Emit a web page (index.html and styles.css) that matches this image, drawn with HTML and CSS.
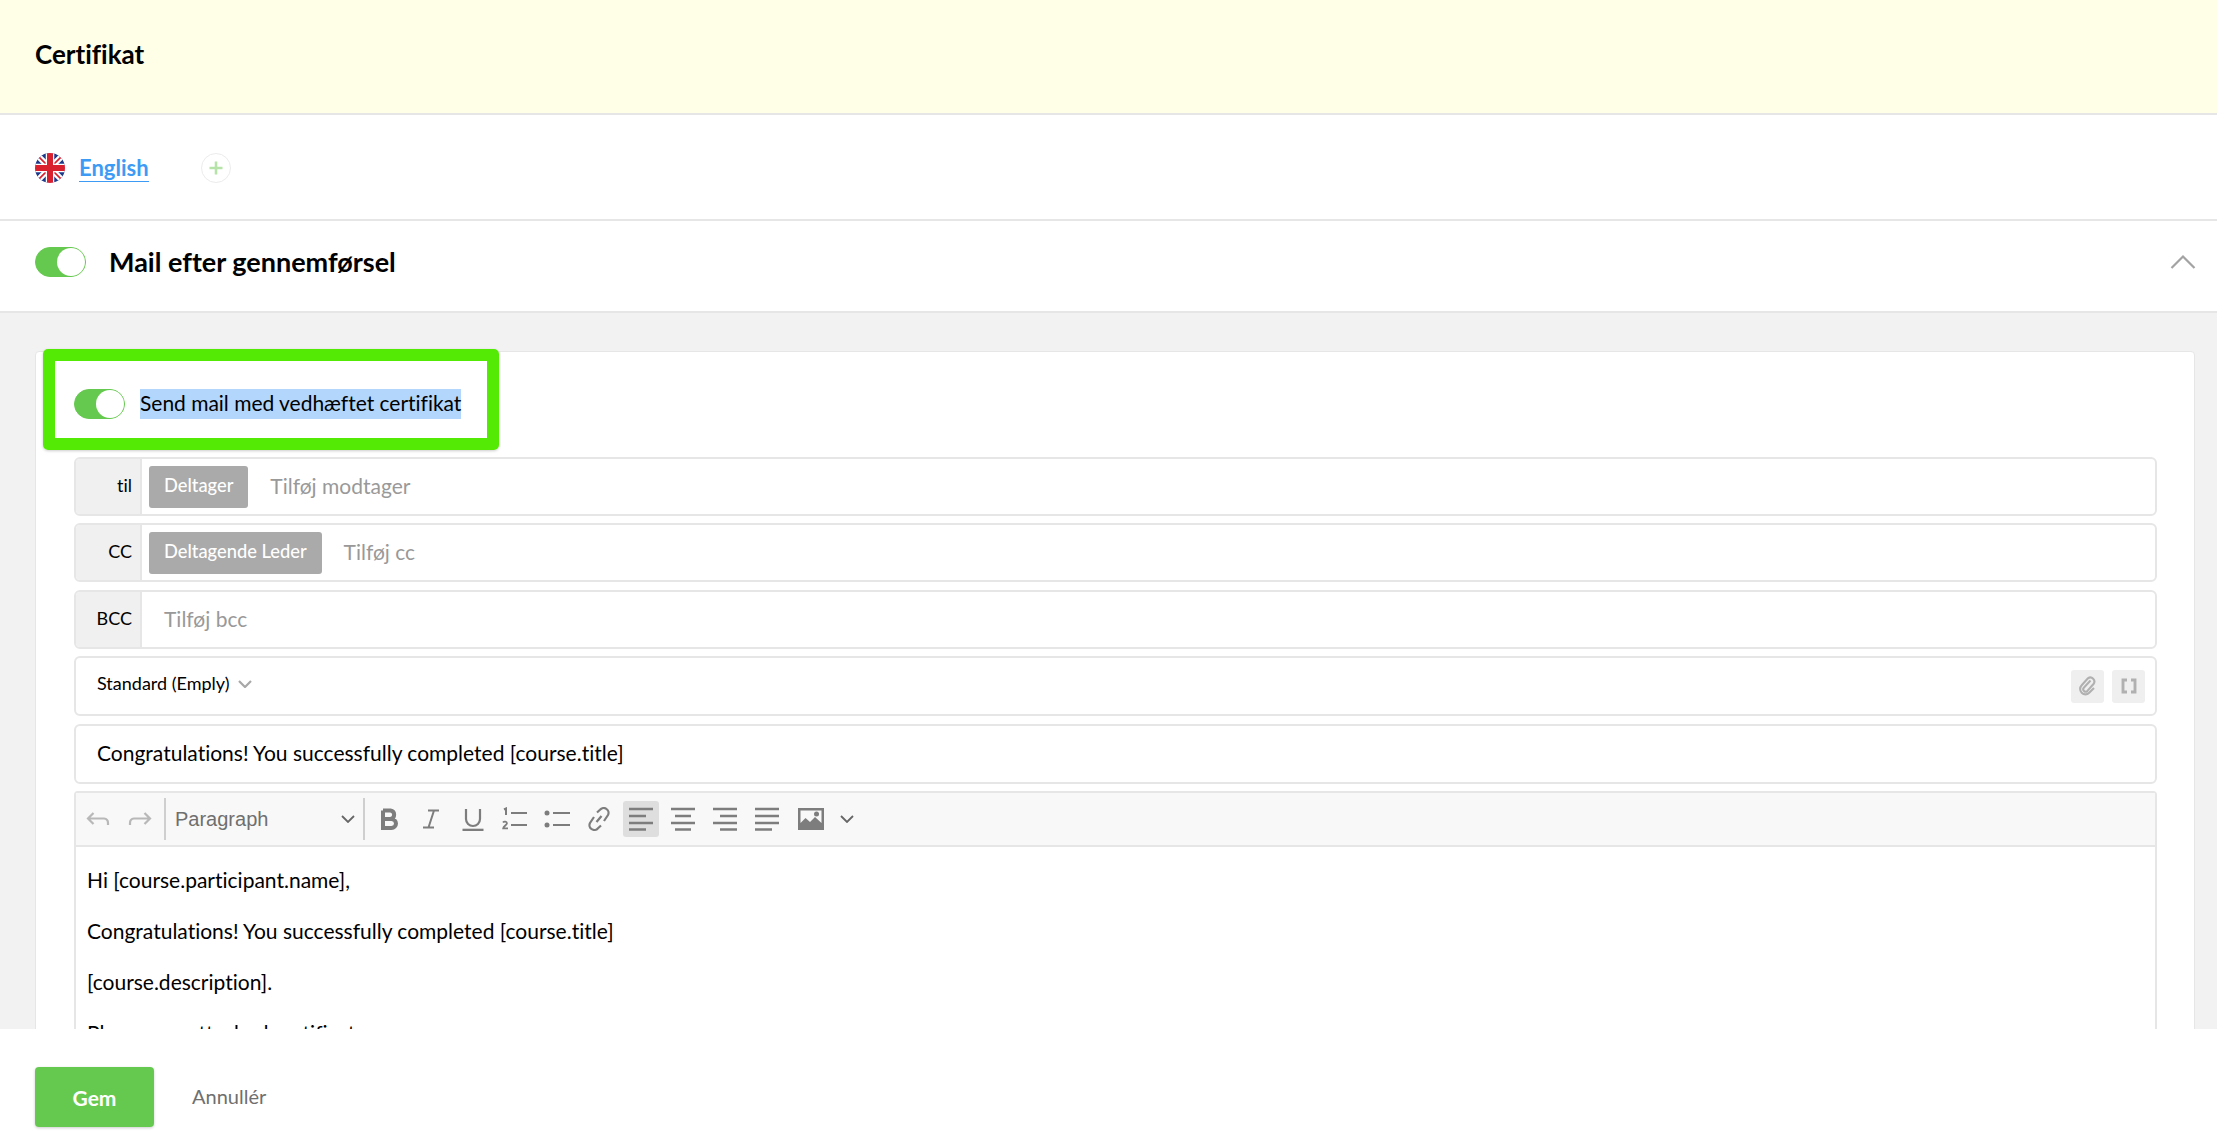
FILE: index.html
```html
<!DOCTYPE html>
<html lang="da">
<head>
<meta charset="utf-8">
<title>Certifikat</title>
<link rel="stylesheet" href="styles.css">
</head>
<body>
<div class="page">
  <div class="scroll">
    <header class="head"><h1>Certifikat</h1></header>
    <div class="langs">
      <svg class="flag" viewBox="0 0 30 30">
        <defs><clipPath id="c"><circle cx="15" cy="15" r="15"/></clipPath></defs>
        <g clip-path="url(#c)">
          <rect width="30" height="30" fill="#1f3a8a"/>
          <path d="M0 0L30 30M30 0L0 30" stroke="#fff" stroke-width="6"/>
          <path d="M0 0L30 30M30 0L0 30" stroke="#d8202f" stroke-width="1.6"/>
          <path d="M15 0V30M0 15H30" stroke="#fff" stroke-width="8.500"/>
          <path d="M15 0V30M0 15H30" stroke="#d8202f" stroke-width="6"/>
        </g>
      </svg>
      <a class="lang-link">English</a>
      <span class="add"><svg viewBox="0 0 16 16" width="16" height="16"><path d="M8 1.5V14.500M1.500 8H14.500" stroke="#b5e3a8" stroke-width="2.600"/></svg></span>
    </div>
    <div class="section">
      <span class="toggle"></span>
      <h2>Mail efter gennemførsel</h2>
      <svg class="collapse" viewBox="0 0 26 16" width="26" height="16"><path d="M1.500 14L13 2.500L24.500 14" fill="none" stroke="#a3a3a3" stroke-width="2.200"/></svg>
    </div>
    <div class="body">
      <div class="card">
        <div class="send">
          <span class="mark"></span>
          <span class="toggle"></span>
          <span class="selected">Send mail med vedhæftet certifikat</span>
        </div>
        <div class="field">
          <label>til</label>
          <div class="value"><span class="chip">Deltager</span><span class="ph">Tilføj modtager</span></div>
        </div>
        <div class="field">
          <label>CC</label>
          <div class="value"><span class="chip">Deltagende Leder</span><span class="ph">Tilføj cc</span></div>
        </div>
        <div class="field">
          <label>BCC</label>
          <div class="value"><span class="ph solo">Tilføj bcc</span></div>
        </div>
        <div class="box template">
          <span class="tpl">Standard (Emply)</span>
          <svg class="tpl-caret" viewBox="0 0 14 8" width="14" height="8"><path d="M1 1L7 7L13 1" fill="none" stroke="#a8a8a8" stroke-width="2.200"/></svg>
          <span class="tool-sq first"><svg viewBox="0 0 20 20" width="20" height="20"><path d="M12.500 4.500L6 11.500a2.400 2.400 0 0 0 3.400 3.400L15.500 8a4 4 0 0 0-5.600-5.600L3.700 9.300a5.300 5.300 0 0 0 7.500 7.500L16 12" fill="none" stroke="#b0b0b0" stroke-width="2.100"/></svg></span>
          <span class="tool-sq"><svg viewBox="0 0 20 20" width="18" height="16"><path d="M7.500 2.500H2.500V17.500H7.500M12.500 2.500H17.500V17.500H12.500" fill="none" stroke="#b0b0b0" stroke-width="3.600"/></svg></span>
        </div>
        <div class="box subject">Congratulations! You successfully completed [course.title]</div>
        <div class="editor">
          <div class="toolbar">
            <span class="btn"><svg viewBox="0 0 24 24" width="24" height="24"><path d="M7.500 6L2 11.500L7.500 17M2 11.500H18a4.500 4.500 0 0 1 4 4.500v2" fill="none" stroke="#b8b8b8" stroke-width="2.200"/></svg></span>
            <span class="btn"><svg viewBox="0 0 24 24" width="24" height="24"><path d="M16.500 6L22 11.500L16.500 17M22 11.500H6a4.500 4.500 0 0 0-4 4.500v2" fill="none" stroke="#b8b8b8" stroke-width="2.200"/></svg></span>
            <span class="sep"></span>
            <span class="select">Paragraph<svg viewBox="0 0 14 8" width="14" height="8"><path d="M1 1L7 7L13 1" fill="none" stroke="#666" stroke-width="1.800"/></svg></span>
            <span class="sep"></span>
            <span class="btn"><svg viewBox="0 0 24 24" width="24" height="24"><path d="M6 3.500H13.500a4.300 4.300 0 0 1 0 8.500H6M6 12H14.500a4.500 4.500 0 0 1 0 9H6ZM6 3.500V21" fill="none" stroke="#7d7d7d" stroke-width="4"/></svg></span>
            <span class="btn"><svg viewBox="0 0 24 24" width="24" height="24"><path d="M9 3.500H20M4 20.500H15M15 3.500L9.500 20.500" fill="none" stroke="#7d7d7d" stroke-width="2"/></svg></span>
            <span class="btn"><svg viewBox="0 0 24 24" width="24" height="24"><path d="M5 2V12a7 7 0 0 0 14 0V2" fill="none" stroke="#7d7d7d" stroke-width="2.200"/><path d="M1.500 23H22.500" stroke="#7d7d7d" stroke-width="2.600"/></svg></span>
            <span class="btn"><svg viewBox="0 0 26 24" width="26" height="24"><path d="M2 2.500L4 1.500V8M9 6H25M9 18H25" fill="none" stroke="#7d7d7d" stroke-width="2"/><path d="M1 15.500a2.200 2 0 0 1 4 .8c0 1.500-3.600 3-3.800 5H6" fill="none" stroke="#7d7d7d" stroke-width="1.800"/></svg></span>
            <span class="btn"><svg viewBox="0 0 26 24" width="26" height="24"><circle cx="3" cy="6" r="2.500" fill="#7d7d7d"/><circle cx="3" cy="18" r="2.500" fill="#7d7d7d"/><path d="M9 6H26M9 18H26" stroke="#7d7d7d" stroke-width="2"/></svg></span>
            <span class="btn"><svg viewBox="0 0 24 24" width="24" height="24"><path d="M10 5.500L13 2.800a4.800 4.800 0 0 1 8 5.200L17 14M14 18.500L11 21.200a4.800 4.800 0 0 1-8-5.200L7 10M9.500 15L14.500 9" fill="none" stroke="#7d7d7d" stroke-width="2.200"/></svg></span>
            <span class="btn active"><svg viewBox="0 0 24 24" width="24" height="24"><path d="M0 2H24M0 9H17M0 16H24M0 22.500H17" stroke="#7d7d7d" stroke-width="2.400"/></svg></span>
            <span class="btn"><svg viewBox="0 0 24 24" width="24" height="24"><path d="M0 2H24M4 9H20M0 16H24M4 22.500H20" stroke="#7d7d7d" stroke-width="2.400"/></svg></span>
            <span class="btn"><svg viewBox="0 0 24 24" width="24" height="24"><path d="M0 2H24M7 9H24M0 16H24M7 22.500H24" stroke="#7d7d7d" stroke-width="2.400"/></svg></span>
            <span class="btn"><svg viewBox="0 0 24 24" width="24" height="24"><path d="M0 2H24M0 9H24M0 16H24M0 22.500H17" stroke="#7d7d7d" stroke-width="2.400"/></svg></span>
            <span class="btn img"><svg viewBox="0 0 26 22" width="26" height="22"><path fill-rule="evenodd" d="M0 0H26V22H0ZM2.500 2.500V15L7.500 10L12 14L17 9L23.500 15V2.500Z" fill="#7d7d7d"/><circle cx="18.500" cy="6" r="2.500" fill="#7d7d7d"/></svg></span>
            <svg class="more" viewBox="0 0 14 8" width="14" height="8"><path d="M1 1L7 7L13 1" fill="none" stroke="#666" stroke-width="1.800"/></svg>
          </div>
          <div class="content">
            <p>Hi [course.participant.name],</p>
            <p>Congratulations! You successfully completed [course.title]</p>
            <p>[course.description].</p>
            <p>Please see attached certificate.</p>
          </div>
        </div>
      </div>
    </div>
  </div>
  <footer class="foot">
    <button class="save">Gem</button>
    <a class="cancel">Annullér</a>
  </footer>
</div>
</body>
</html>
```

FILE: styles.css
```css
* { box-sizing: border-box; }
html, body { margin: 0; height: 100%; overflow: hidden; }
body { font-family: Lato, "Liberation Sans", sans-serif; font-variant-ligatures: none; color: #000; background: #fff; }
.page { height: 1132px; display: flex; flex-direction: column; }
.scroll { height: 1029px; overflow: hidden; background: #f2f2f2; }
.head { height: 115px; background: #ffffe8; border-bottom: 2px solid #e6e6e6; padding: 0 35px 5px; display: flex; align-items: center; }
.head h1 { margin: 0; font-size: 26px; font-weight: 700; }
.langs { height: 106px; background: #fff; border-bottom: 2px solid #e6e6e6; padding: 2px 35px 0; display: flex; align-items: center; }
.flag { width: 30px; height: 30px; }
.lang-link { margin-left: 14px; color: #3d9bf5; font-size: 22px; font-weight: 700; line-height: 26px; border-bottom: 1px solid #3d9bf5; }
.add { margin-left: 52px; width: 30px; height: 30px; border: 1px solid #ececec; border-radius: 50%; display: flex; align-items: center; justify-content: center; }
.section { height: 92px; background: #fff; border-bottom: 2px solid #e6e6e6; padding: 0 21px 8px 35px; display: flex; align-items: center; }
.section h2 { margin: 0 0 2px 23px; font-size: 27px; font-weight: 700; flex: 1; }
.toggle { width: 51px; height: 30px; flex: none; border-radius: 15px; background: #66c94f; border: 1px solid #66c94f; position: relative; display: block; }
.toggle::after { content: ""; position: absolute; right: 0; top: 0; width: 28px; height: 28px; border-radius: 50%; background: #fff; }
.collapse { flex: none; }
.body { padding: 38px 22px 0 35px; }
.card { background: #fff; border: 1px solid #e6e6e6; border-radius: 4px; padding: 0 37px 0 38px; height: 800px; }
.send { position: relative; height: 105px; display: flex; align-items: center; padding-bottom: 1px; }
.mark { position: absolute; left: -31px; top: -3px; width: 456px; height: 101px; border: 12px solid #55ea05; border-radius: 5px; box-shadow: 0 1px 3px rgba(0,0,0,.2); }
.selected { margin-left: 15px; background: #b3d6fd; font-size: 21px; line-height: 28px; padding-bottom: 2px; letter-spacing: -.02px; }
.field { display: flex; height: 59px; border: 2px solid #e6e6e6; border-radius: 6px; margin-bottom: 7.4px; overflow: hidden; }
.field label { width: 66px; flex: none; background: #f0f0f0; border-right: 2px solid #e6e6e6; text-align: right; padding-right: 8px; font-size: 18px; line-height: 53px; }
.value { flex: 1; display: flex; align-items: center; padding-left: 7px; }
.chip { background: #aaaaaa; color: #fff; height: 42px; line-height: 39px; padding: 0 15px; border-radius: 3px; font-size: 18.300px; font-weight: 500; }
.ph { color: #999; font-size: 21px; margin-left: 22px; padding-bottom: 2px; }
.ph.solo { margin-left: 15px; }
.box { display: flex; align-items: center; border: 2px solid #e6e6e6; border-radius: 6px; height: 60px; margin-bottom: 8px; padding: 0 10px 0 21px; }
.tpl { font-size: 18px; padding-bottom: 6px; }
.tpl-caret { margin-left: 8px; flex: none; margin-bottom: 4px; }
.tool-sq { width: 33px; height: 33px; background: #efefef; border-radius: 3px; display: flex; align-items: center; justify-content: center; margin-left: 8px; }
.tool-sq.first { margin-left: auto; }
.subject { font-size: 21px; margin-bottom: 7px; padding-bottom: 4px; }
.editor { border: 2px solid #e6e6e6; border-radius: 4px 4px 0 0; }
.toolbar { height: 54px; background: #f8f8f8; border-bottom: 2px solid #e6e6e6; display: flex; align-items: center; gap: 6px; padding-left: 4px; }
.btn { width: 36px; height: 36px; flex: none; display: flex; align-items: center; justify-content: center; border-radius: 3px; }
.btn.active { background: #dedede; }
.btn.img { margin-left: 2px; }
.sep { width: 2px; height: 42px; background: #cfcfcf; flex: none; }
.select { width: 185px; flex: none; display: flex; align-items: center; justify-content: space-between; font-family: "Liberation Sans", sans-serif; font-size: 20px; color: #6f6f6f; padding: 0 2px 0 3px; }
.more { margin-left: 5px; flex: none; }
.content { padding: 7px 10px 0 11px; font-size: 21px; }
.content p { margin: 0; line-height: 51px; }
.foot { height: 103px; background: #fff; display: flex; align-items: flex-start; padding: 38px 35px 0; }
.save { width: 119px; height: 60px; border: 0; border-radius: 4px; background: #66c94f; color: #fff; font: 700 21px Lato, sans-serif; box-shadow: 0 1px 3px rgba(0,0,0,.2); }
.cancel { margin-left: 38px; font-size: 20px; line-height: 58px; color: #6f6f6f; }
```
